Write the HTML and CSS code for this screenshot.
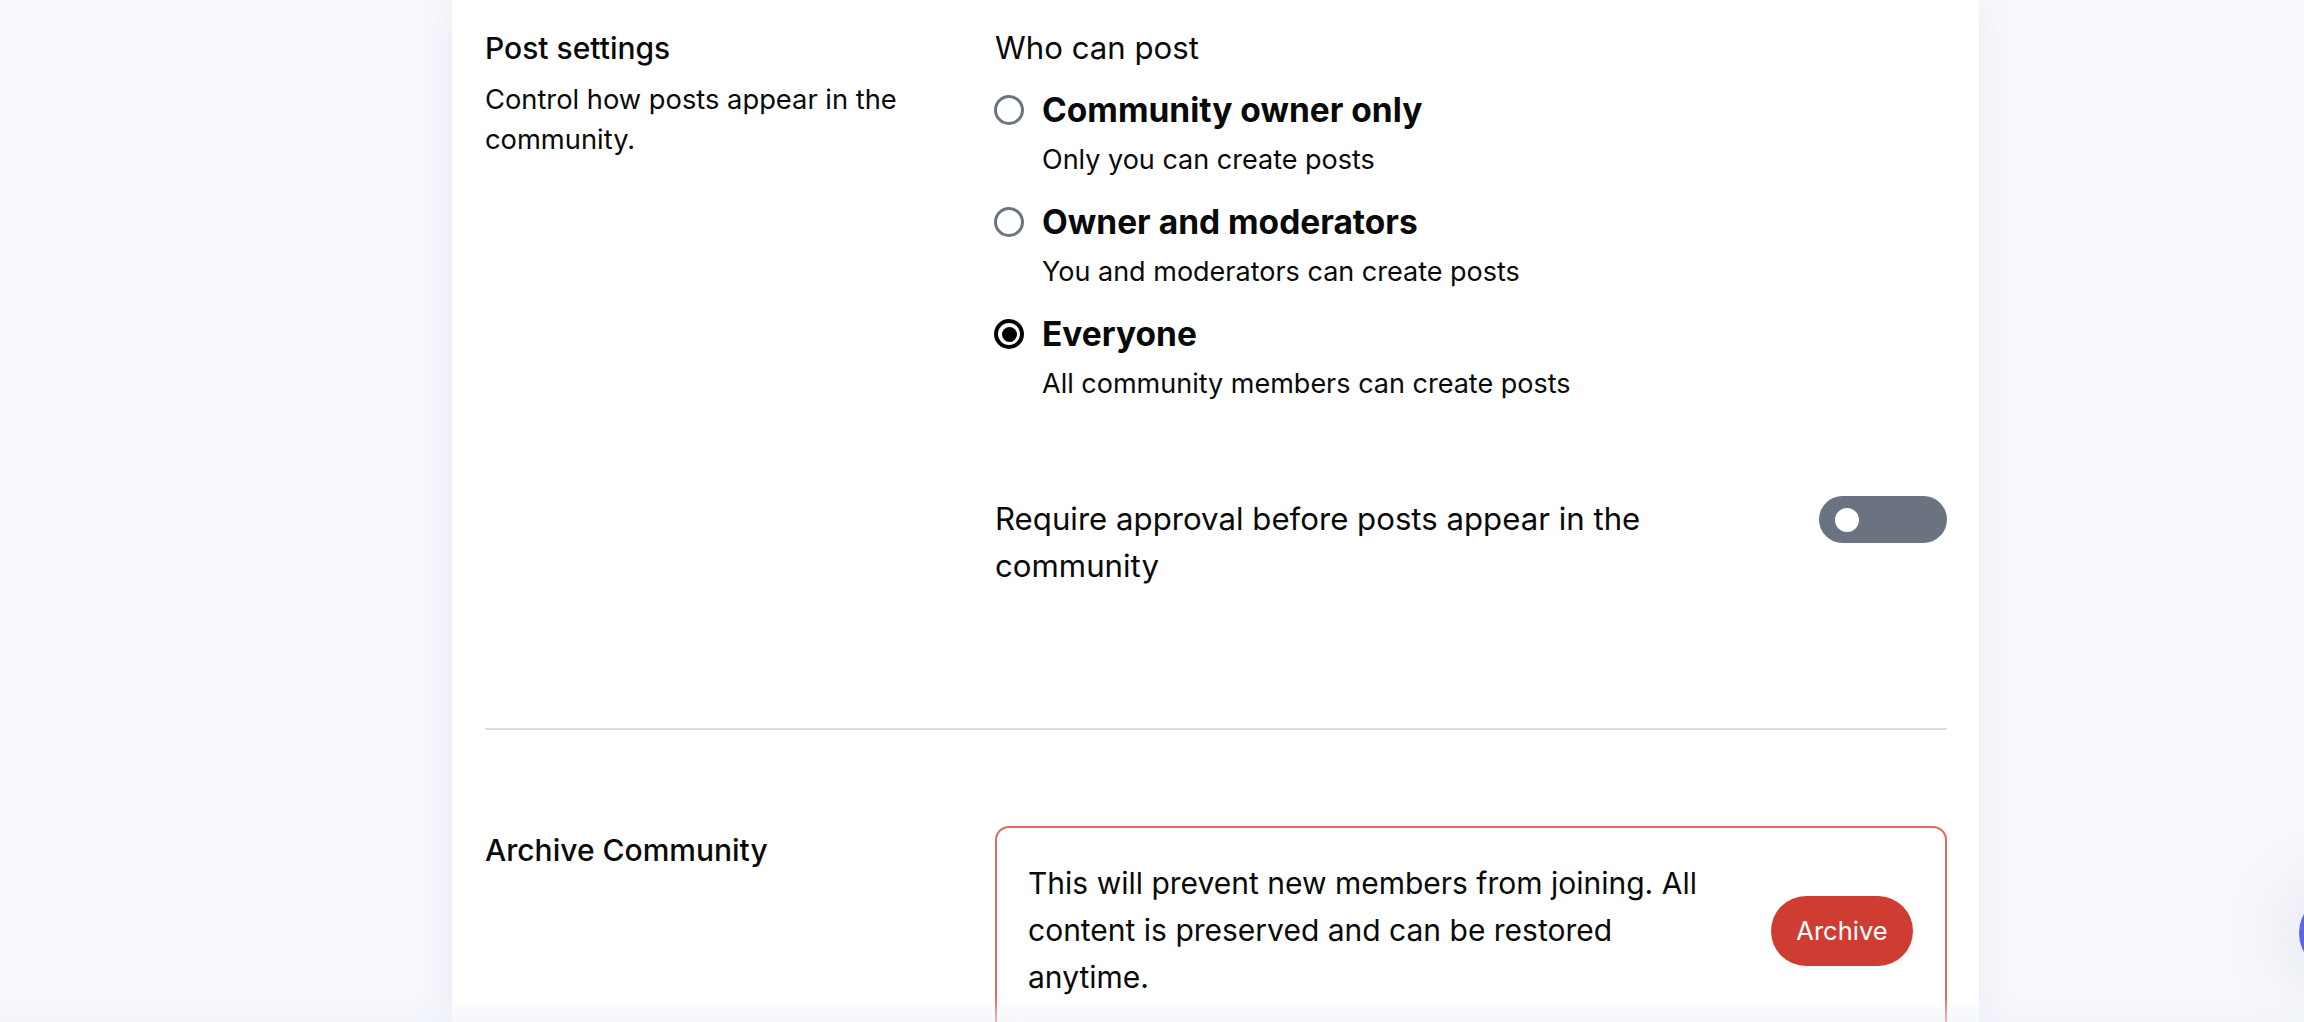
FILE: index.html
```html
<!DOCTYPE html>
<html lang="en">
<head>
<meta charset="utf-8">
<title>Community settings</title>
<link rel="stylesheet" href="styles.css">
</head>
<body>
<div class="page">
  <main class="card">
    <section class="row row-post">
      <div class="row-head">
        <h3 class="row-title">Post settings</h3>
        <p class="row-desc">Control how posts appear in the community.</p>
      </div>
      <div class="row-body">
        <div class="field-label">Who can post</div>
        <div class="options">
          <div class="option">
            <span class="radio"></span>
            <span class="opt-title">Community owner only</span>
            <span class="opt-sub">Only you can create posts</span>
          </div>
          <div class="option">
            <span class="radio"></span>
            <span class="opt-title">Owner and moderators</span>
            <span class="opt-sub">You and moderators can create posts</span>
          </div>
          <div class="option">
            <span class="radio radio-checked"><span class="radio-dot"></span></span>
            <span class="opt-title">Everyone</span>
            <span class="opt-sub">All community members can create posts</span>
          </div>
        </div>
        <div class="toggle-row">
          <span class="toggle-label">Require approval before posts appear in the community</span>
          <span class="switch"><span class="knob"></span></span>
        </div>
      </div>
    </section>
    <div class="divider"></div>
    <section class="row row-archive">
      <div class="row-head">
        <h3 class="row-title archive-title">Archive Community</h3>
      </div>
      <div class="row-body">
        <div class="danger-box">
          <p class="danger-text">This will prevent new members from joining. All content is preserved and can be restored anytime.</p>
          <button class="btn-archive" type="button">Archive</button>
        </div>
      </div>
    </section>
  </main>
</div>
<div class="fab"></div>
<div class="bottom-fade"></div>
</body>
</html>
```
FILE: styles.css
```css
* { box-sizing: border-box; }

html, body {
  margin: 0;
  padding: 0;
  height: 100%;
  overflow: hidden;
}

body {
  background: #f8f9fd;
  font-family: "Inter", "Lato", sans-serif;
  color: #0a0a0a;
}

.page {
  padding-left: 452px;
  height: 100%;
}

.card {
  width: 1527px;
  min-height: 1100px;
  background: #ffffff;
  padding: 28px 32px 0 33px;
  box-shadow: 0 0 40px rgba(70, 85, 170, 0.09);
}

.row {
  display: grid;
  grid-template-columns: 510px 1fr;
}

.row-head {
  padding-right: 40px;
}

.row-title {
  margin: 0;
  font-size: 30px;
  font-weight: 500;
  line-height: 40px;
}

.row-desc {
  margin: 12px 0 0;
  font-size: 27.3px;
  line-height: 40px;
}

.field-label {
  font-size: 31.2px;
  line-height: 40px;
}

.options {
  display: flex;
  flex-direction: column;
  gap: 20px;
  margin-top: 20px;
}

.option {
  display: grid;
  grid-template-columns: 29px 1fr;
  column-gap: 18px;
  row-gap: 8px;
  align-items: center;
}

.radio {
  width: 30px;
  height: 30px;
  border-radius: 50%;
  border: 3px solid #6b7280;
  display: flex;
  align-items: center;
  justify-content: center;
  margin-left: -1px;
}

.radio-checked {
  border: 4px solid #000000;
}

.radio-dot {
  width: 15px;
  height: 15px;
  border-radius: 50%;
  background: #000000;
}

.opt-title {
  font-size: 33.5px;
  font-weight: 700;
  line-height: 44px;
}

.opt-sub {
  grid-column: 2;
  font-size: 27px;
  line-height: 40px;
}

.toggle-row {
  display: flex;
  justify-content: space-between;
  align-items: flex-start;
  margin-top: 92px;
  padding-bottom: 138px;
}

.toggle-label {
  max-width: 700px;
  font-size: 31.2px;
  line-height: 47px;
}

.switch {
  width: 128px;
  height: 47px;
  border-radius: 24px;
  background: #6b7280;
  display: flex;
  align-items: center;
  padding-left: 16px;
}

.knob {
  width: 24px;
  height: 24px;
  border-radius: 50%;
  background: #ffffff;
}

.divider {
  height: 2px;
  background: #d9dde5;
}

.row-archive {
  padding-top: 96px;
}

.archive-title {
  margin-top: 4px;
}

.danger-box {
  border: 2px solid #e06a61;
  border-radius: 14px;
  padding: 32px 32px 33px 31px;
  display: flex;
  align-items: center;
  justify-content: space-between;
  gap: 32px;
}

.danger-text {
  margin: 0;
  max-width: 690px;
  font-size: 30px;
  line-height: 47px;
}

.btn-archive {
  flex: none;
  width: 142px;
  height: 70px;
  border: none;
  border-radius: 35px;
  background: #cf3d32;
  color: #ffffff;
  font-family: "Inter", "Lato", sans-serif;
  font-size: 25.5px;
  padding: 0;
}

.fab {
  position: fixed;
  left: 2299px;
  top: 893px;
  width: 80px;
  height: 80px;
  border-radius: 50%;
  background: #5b65e6;
  box-shadow: 0 0 60px 30px rgba(90, 100, 150, 0.08);
}

.bottom-fade {
  position: fixed;
  left: 0;
  right: 0;
  bottom: 0;
  height: 26px;
  background: linear-gradient(to bottom, rgba(246, 247, 252, 0), rgba(240, 242, 250, 0.6));
  pointer-events: none;
}
```
